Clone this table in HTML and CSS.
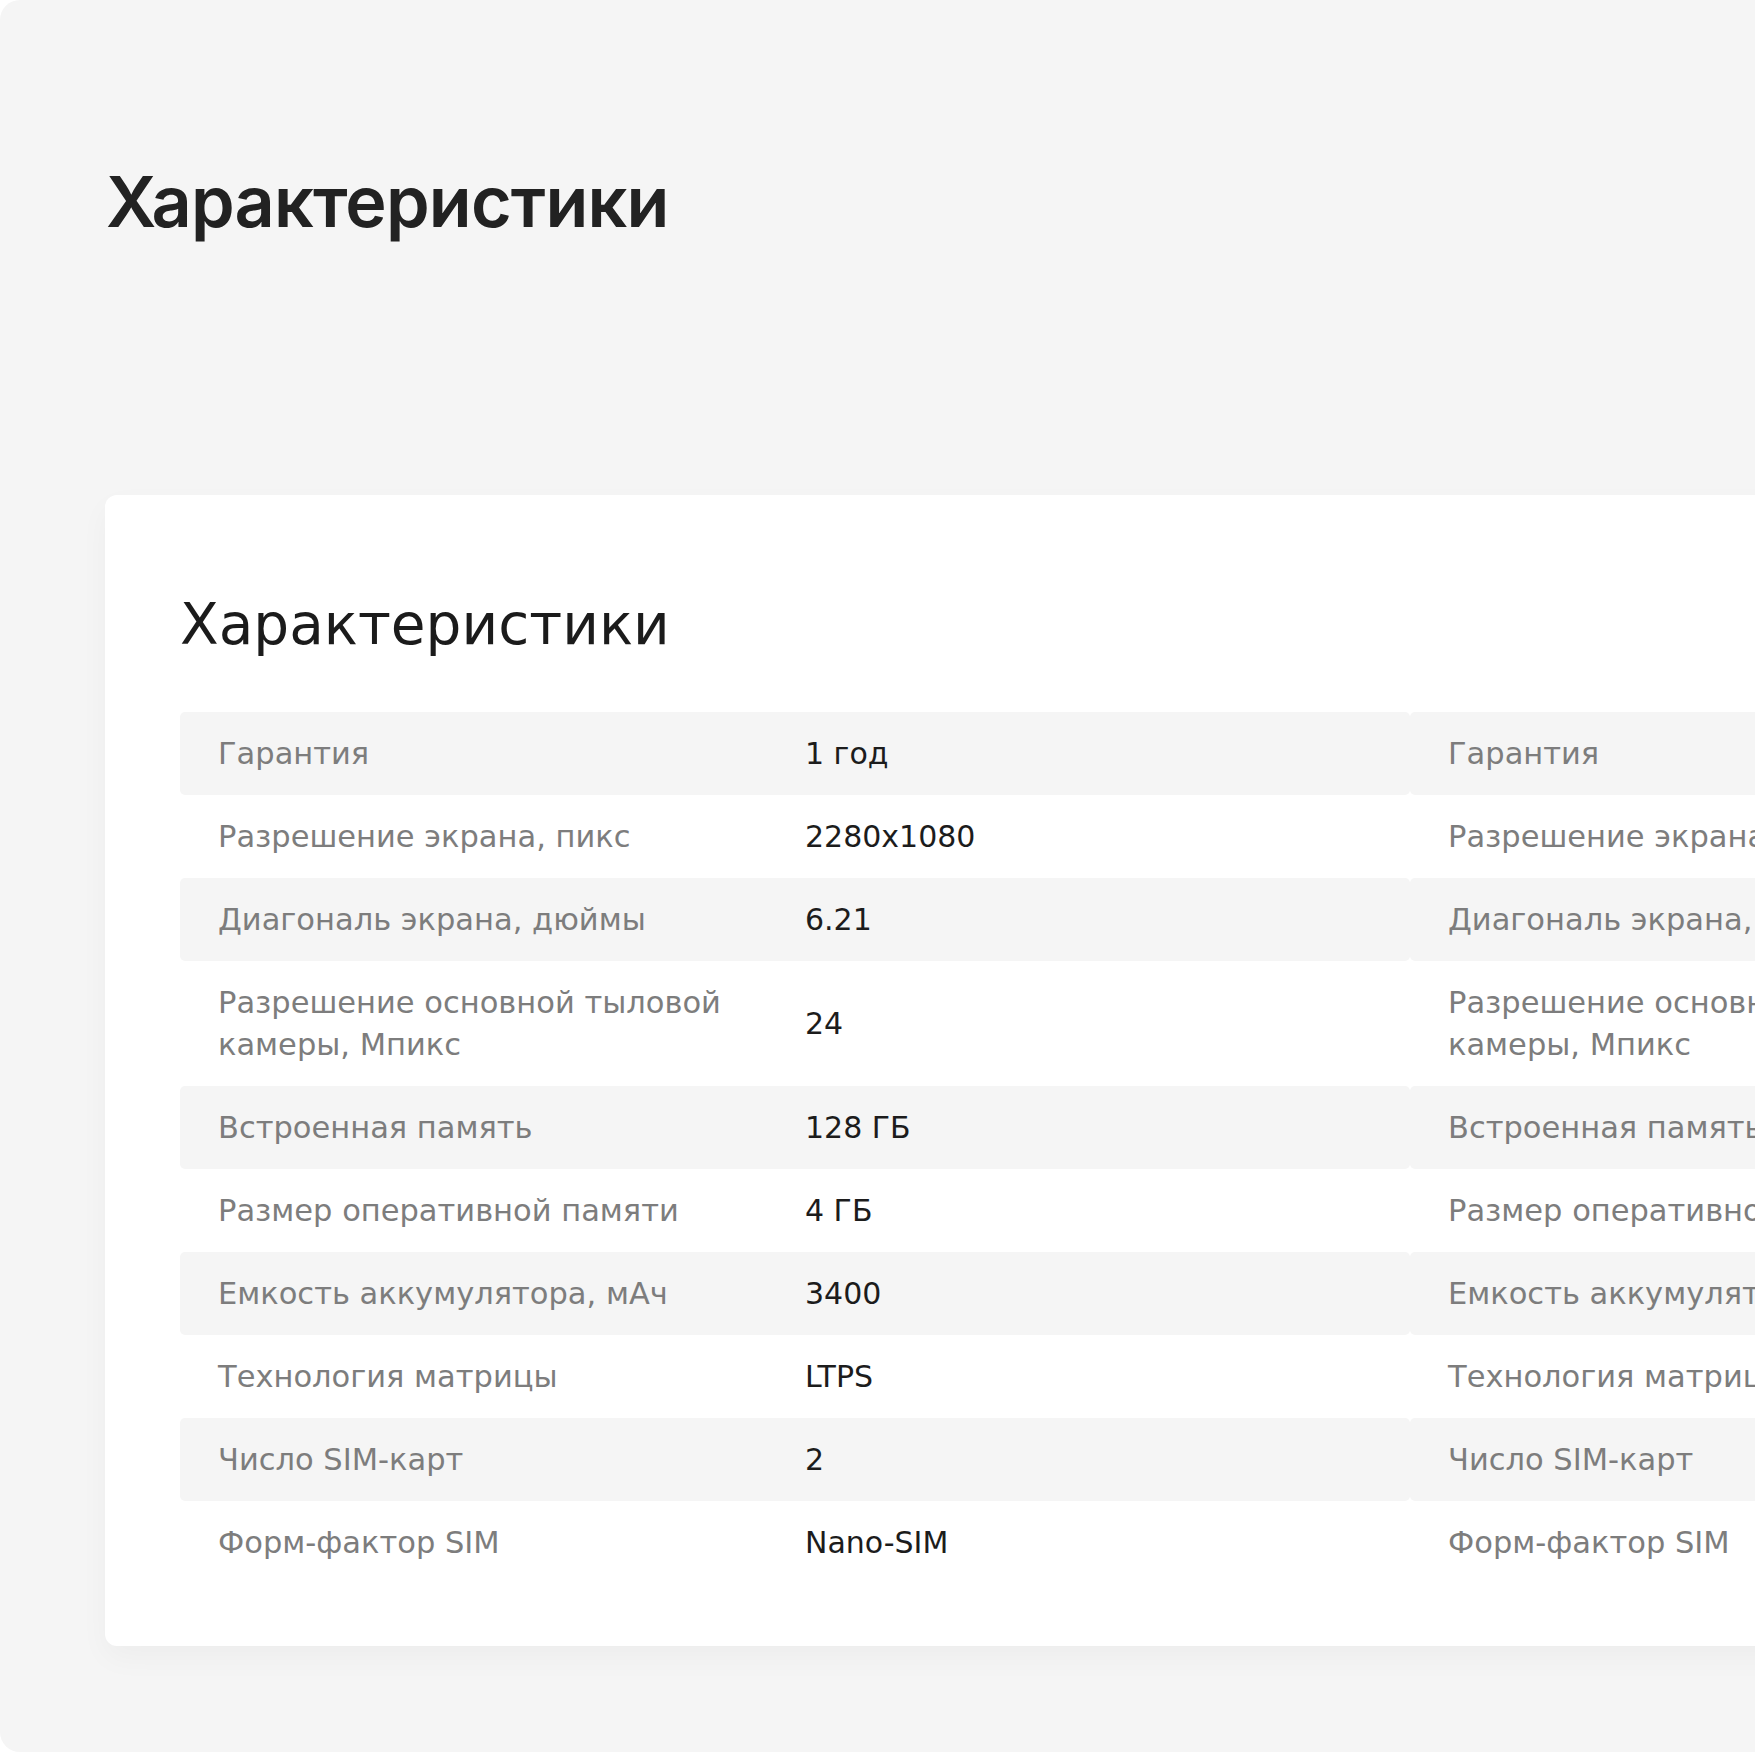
FILE: index.html
```html
<!DOCTYPE html>
<html lang="ru">
<head>
<meta charset="utf-8">
<title>Характеристики</title>
<link rel="stylesheet" href="styles.css">
</head>
<body>
<div class="panel">
  <h1 class="page-title">Характеристики</h1>
  <section class="card">
    <h2 class="card-title">Характеристики</h2>
    <div class="tables">
      <div class="table">
        <div class="row alt"><div class="label">Гарантия</div><div class="value">1 год</div></div>
        <div class="row"><div class="label">Разрешение экрана, пикс</div><div class="value">2280x1080</div></div>
        <div class="row alt"><div class="label">Диагональ экрана, дюймы</div><div class="value">6.21</div></div>
        <div class="row"><div class="label">Разрешение основной тыловой камеры, Мпикс</div><div class="value">24</div></div>
        <div class="row alt"><div class="label">Встроенная память</div><div class="value">128 ГБ</div></div>
        <div class="row"><div class="label">Размер оперативной памяти</div><div class="value">4 ГБ</div></div>
        <div class="row alt"><div class="label">Емкость аккумулятора, мАч</div><div class="value">3400</div></div>
        <div class="row"><div class="label">Технология матрицы</div><div class="value">LTPS</div></div>
        <div class="row alt"><div class="label">Число SIM-карт</div><div class="value">2</div></div>
        <div class="row"><div class="label">Форм-фактор SIM</div><div class="value">Nano-SIM</div></div>
      </div>
      <div class="table">
        <div class="row alt"><div class="label">Гарантия</div><div class="value">1 год</div></div>
        <div class="row"><div class="label">Разрешение экрана, пикс</div><div class="value">2280x1080</div></div>
        <div class="row alt"><div class="label">Диагональ экрана, дюймы</div><div class="value">6.21</div></div>
        <div class="row"><div class="label">Разрешение основной тыловой камеры, Мпикс</div><div class="value">24</div></div>
        <div class="row alt"><div class="label">Встроенная память</div><div class="value">128 ГБ</div></div>
        <div class="row"><div class="label">Размер оперативной памяти</div><div class="value">4 ГБ</div></div>
        <div class="row alt"><div class="label">Емкость аккумулятора, мАч</div><div class="value">3400</div></div>
        <div class="row"><div class="label">Технология матрицы</div><div class="value">LTPS</div></div>
        <div class="row alt"><div class="label">Число SIM-карт</div><div class="value">2</div></div>
        <div class="row"><div class="label">Форм-фактор SIM</div><div class="value">Nano-SIM</div></div>
      </div>
    </div>
  </section>
</div>
</body>
</html>
```

FILE: styles.css
```css
html, body {
  margin: 0;
  padding: 0;
  background: #ffffff;
  overflow: hidden;
}

.panel {
  box-sizing: border-box;
  width: 1860px;
  height: 1752px;
  background: #f5f5f5;
  border-radius: 20px;
  padding: 167px 0 0 105px;
}

.page-title {
  margin: 0 0 0 1px;
  font-family: "Inter", "Noto Sans", sans-serif;
  font-weight: 600;
  font-size: 70px;
  line-height: 70px;
  color: #222222;
  letter-spacing: -0.8px;
}

.card {
  box-sizing: border-box;
  width: 2700px;
  margin-top: 258px;
  background: #ffffff;
  border-radius: 12px;
  box-shadow: 0 12px 30px rgba(0, 0, 0, 0.035);
  padding: 101px 0 62px 75px;
}

.card-title {
  margin: 0 0 59px 0;
  font-family: "DejaVu Sans", sans-serif;
  font-weight: 400;
  font-size: 56.5px;
  line-height: 57px;
  color: #1b1b1b;
}

.tables {
  display: flex;
}

.table {
  flex: 0 0 1230px;
  display: flex;
  flex-direction: column;
}

.row {
  display: grid;
  grid-template-columns: 547px 1fr;
  column-gap: 40px;
  align-items: center;
  padding: 21px 40px 20px 38px;
  border-radius: 5px;
  font-family: "DejaVu Sans", sans-serif;
  font-size: 30.5px;
  line-height: 42px;
}

.row.alt {
  background: #f5f5f5;
}

.label {
  color: #7d7d7d;
}

.value {
  color: #1c1c1c;
  font-size: 30px;
}
```
